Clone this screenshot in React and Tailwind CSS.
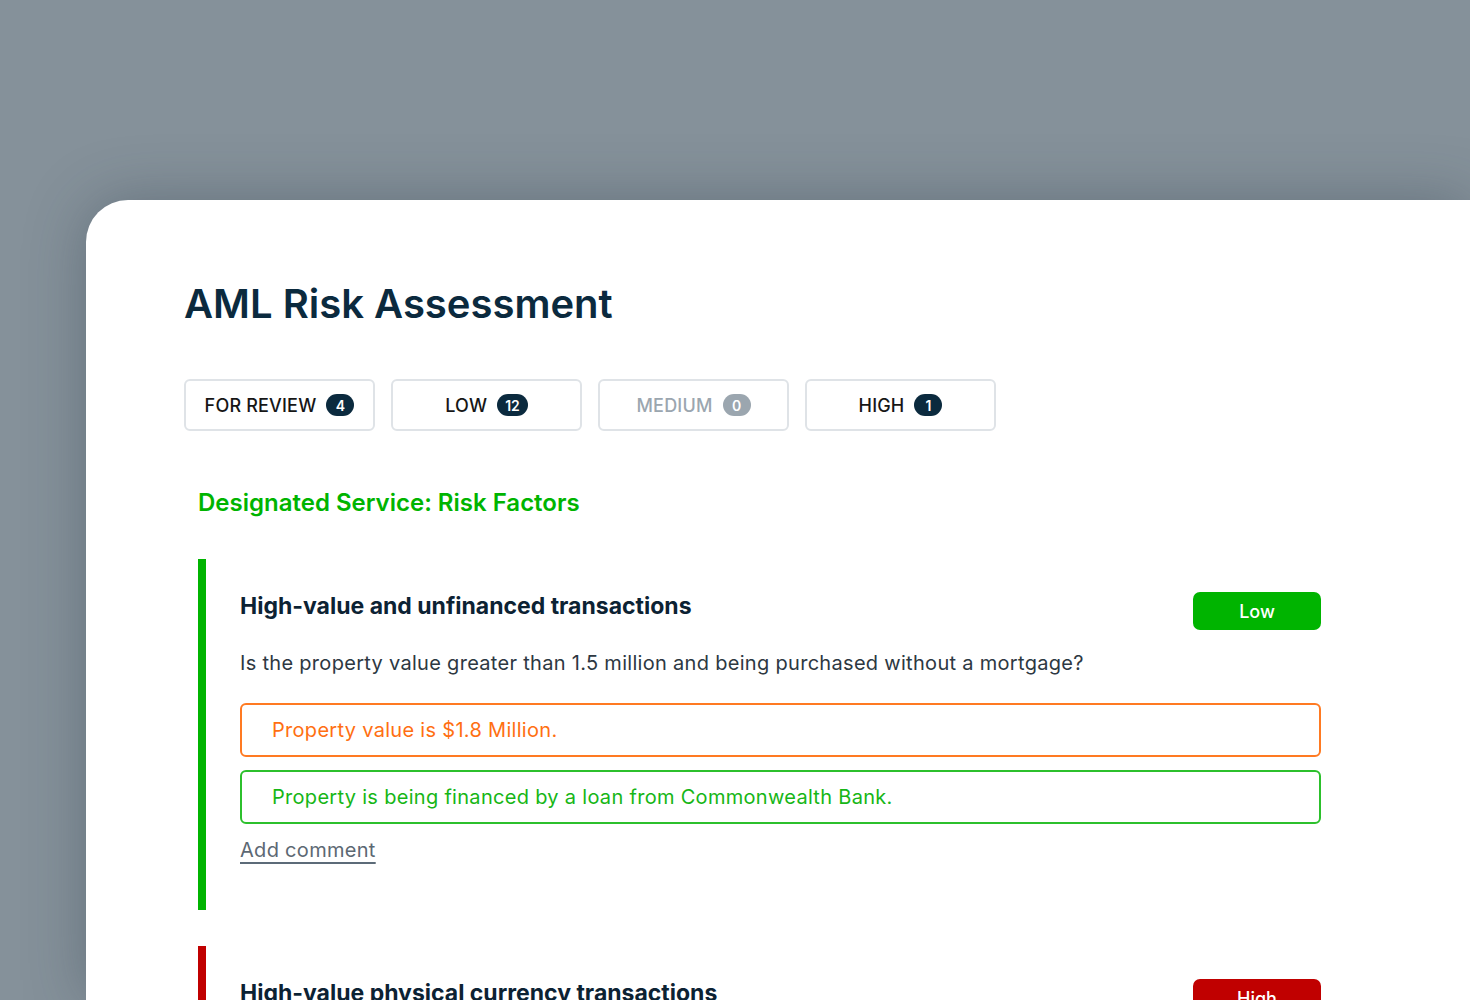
const tabs = [
  { label: 'For review', count: 4 },
  { label: 'Low', count: 12 },
  { label: 'Medium', count: 0, muted: true },
  { label: 'High', count: 1 },
]

const factors = [
  {
    title: 'High-value and unfinanced transactions',
    rating: 'Low',
    bar: 'bg-[#00b400]',
    badge: 'bg-[#00b400]',
    question: 'Is the property value greater than 1.5 million and being purchased without a mortgage?',
    answers: [
      { text: 'Property value is $1.8 Million.', tone: 'border-[#ff7a22] text-[#ff6f12]' },
      { text: 'Property is being financed by a loan from Commonwealth Bank.', tone: 'border-[#2cc02c] text-[#16b616]' },
    ],
  },
  {
    title: 'High-value physical currency transactions',
    rating: 'High',
    bar: 'bg-[#c00000]',
    badge: 'bg-[#c00000]',
    question: 'Is the client paying any part of the purchase price in physical currency?',
    answers: [],
  },
]

function FilterTab({ label, count, muted }) {
  return (
    <button
      type="button"
      className="flex h-[52px] w-[191px] items-center justify-center gap-[10px] rounded-[6px] border-2 border-[#dfe3e7] bg-white"
    >
      <span className={`text-[18px] font-medium uppercase tracking-[0.01em] ${muted ? 'text-[#9ba6af]' : 'text-[#161616]'}`}>{label}</span>
      <span
        className={`flex h-[22px] min-w-[28px] items-center justify-center rounded-full px-[8px] text-[14px] font-semibold text-white ${
          muted ? 'bg-[#9ba6af]' : 'bg-[#0b2a3e]'
        }`}
      >
        {count}
      </span>
    </button>
  )
}

function RiskFactor({ factor }) {
  return (
    <div className="flex">
      <div className={`w-[8px] shrink-0 ${factor.bar}`} />
      <div className="flex-1 pb-[46px] pl-[34px] pt-[33px]">
        <div className="flex items-start justify-between">
          <h3 className="text-[23px] font-bold leading-[28px] text-[#0c2233]">{factor.title}</h3>
          <span
            className={`flex h-[38px] w-[128px] items-center justify-center rounded-[7px] text-[18px] font-medium text-white ${factor.badge}`}
          >
            {factor.rating}
          </span>
        </div>
        <p className="mt-[19px] text-[20px] leading-[28px] tracking-[0.015em] text-[#2d3842]">{factor.question}</p>
        <div className="mt-[26px] flex flex-col gap-[13px]">
          {factor.answers.map((a) => (
            <div
              key={a.text}
              className={`flex h-[54px] items-center rounded-[6px] border-2 pl-[30px] text-[20px] tracking-[0.015em] ${a.tone}`}
            >
              {a.text}
            </div>
          ))}
        </div>
        <a
          href="#"
          className="mt-[12px] inline-block text-[20px] leading-[28px] tracking-[0.015em] text-[#5c6873] underline decoration-[#5c6b78] underline-offset-[5px]"
        >
          Add comment
        </a>
      </div>
    </div>
  )
}

export default function App() {
  return (
    <div className="flex h-[1000px] overflow-hidden bg-[#85919a] pl-[86px] pt-[200px] font-['Inter','Liberation_Sans',sans-serif]">
      <main className="flex-1 rounded-tl-[42px] bg-white pl-[98px] pt-[80px] shadow-[0_0_60px_rgba(40,55,70,0.35)]">
        <h1 className="text-[40px] font-semibold leading-[48px] text-[#0b2a3e]">AML Risk Assessment</h1>

        <div className="mt-[51px] flex gap-[16px]">
          {tabs.map((t) => (
            <FilterTab key={t.label} {...t} />
          ))}
        </div>

        <section className="ml-[14px] mr-[149px] mt-[56px]">
          <h2 className="text-[24px] font-semibold leading-[32px] text-[#00b400]">Designated Service: Risk Factors</h2>
          <div className="mt-[40px] flex flex-col gap-[36px]">
            {factors.map((f) => (
              <RiskFactor key={f.title} factor={f} />
            ))}
          </div>
        </section>
      </main>
    </div>
  )
}
